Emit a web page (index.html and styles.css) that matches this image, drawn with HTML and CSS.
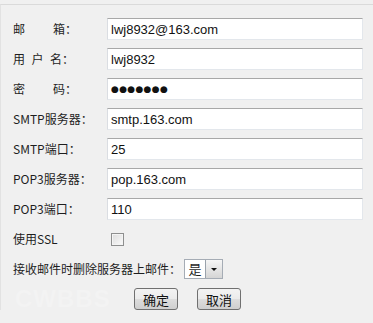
FILE: index.html
```html
<!DOCTYPE html>
<html lang="zh-CN">

<head>
  <meta charset="UTF-8">
  <link rel="stylesheet" href="styles.css">
</head>

<body>
  <div class="mail-title">邮件帐户设置</div>
  <div class="mail-panel">
    <div class="mail-row">
      <label class="mail-label"><span class="gap-wide">邮</span>箱：</label>
      <input class="mail-input" type="text" value="lwj8932@163.com">
    </div>
    <div class="mail-row">
      <label class="mail-label"><span class="gap-narrow">用户</span>名：</label>
      <input class="mail-input" type="text" value="lwj8932">
    </div>
    <div class="mail-row">
      <label class="mail-label"><span class="gap-wide">密</span>码：</label>
      <input class="mail-input mail-pass" type="text" value="●●●●●●●">
    </div>
    <div class="mail-row">
      <label class="mail-label">SMTP服务器：</label>
      <input class="mail-input" type="text" value="smtp.163.com">
    </div>
    <div class="mail-row">
      <label class="mail-label">SMTP端口：</label>
      <input class="mail-input" type="text" value="25">
    </div>
    <div class="mail-row">
      <label class="mail-label">POP3服务器：</label>
      <input class="mail-input" type="text" value="pop.163.com">
    </div>
    <div class="mail-row">
      <label class="mail-label">POP3端口：</label>
      <input class="mail-input" type="text" value="110">
    </div>
    <div class="mail-row">
      <label class="mail-label">使用SSL</label>
      <input class="mail-check" type="checkbox">
    </div>
    <div class="mail-row">
      <label class="mail-label-long">接收邮件时删除服务器上邮件：</label>
      <div class="mail-select">
        <span class="mail-select-value">是</span>
        <span class="mail-select-btn"><span class="mail-arrow"></span></span>
      </div>
    </div>
    <div class="mail-actions">
      <span class="mail-watermark">CWBBS</span>
      <button class="mail-btn">确定</button>
      <button class="mail-btn">取消</button>
    </div>
  </div>
</body>

</html>
```

FILE: styles.css
```css
body {
  margin: 0;
  background-color: #f0f0f0;
  font-family: "Noto Sans CJK SC", "Liberation Sans", sans-serif;
  color: #1e1e1e;
  overflow: hidden;
  height: 323px;
}

.mail-title {
  height: 14px;
  margin-top: -13px;
  padding-left: 86px;
  font-size: 12px;
  line-height: 14px;
  color: #a8a8a8;
}

.mail-panel {
  margin-top: 3px;
  border-top: 1px solid #dadada;
  border-left: 1px solid #e2e2e2;
  padding: 13px 0 0 12px;
  display: flex;
  flex-direction: column;
  gap: 8px;
}

.mail-row {
  display: flex;
  align-items: center;
  height: 22px;
}

.mail-label {
  width: 94px;
  flex-shrink: 0;
  font-size: 12px;
  line-height: 14px;
  white-space: nowrap;
}

.gap-wide {
  margin-right: 28px;
}

.gap-narrow {
  letter-spacing: 6.5px;
}

.mail-label-long {
  width: 171px;
  flex-shrink: 0;
  font-size: 12px;
  line-height: 14px;
  white-space: nowrap;
}

.mail-input {
  box-sizing: border-box;
  width: 256px;
  height: 22px;
  margin: 0;
  padding: 0 3px;
  border: 1px solid #e3e7ec;
  border-top-color: #a8a8a8;
  border-left-color: #dadde2;
  background: #fff;
  font-family: "Liberation Sans", sans-serif;
  font-size: 13px;
  color: #111;
  outline: none;
}

.mail-pass {
  font-family: "DejaVu Sans", sans-serif;
  font-size: 9px;
  letter-spacing: 0.3px;
}

.mail-check {
  appearance: none;
  -webkit-appearance: none;
  box-sizing: border-box;
  width: 13px;
  height: 13px;
  margin: 0 0 0 4px;
  border: 1px solid #8e8f8f;
  background: linear-gradient(135deg, #dcdcdc, #fbfbfb);
  box-shadow: inset 0 0 0 1px #f4f4f4;
}

.mail-select {
  display: flex;
  height: 20px;
  box-sizing: border-box;
  border: 1px solid #a5acb5;
  background: #fff;
}

.mail-select-value {
  width: 20px;
  font-size: 13px;
  line-height: 18px;
  text-align: center;
}

.mail-select-btn {
  width: 16px;
  border-left: 1px solid #9aa2ab;
  background: linear-gradient(#f6f6f6, #d5d5d5);
  display: flex;
  align-items: center;
  justify-content: center;
}

.mail-arrow {
  width: 0;
  height: 0;
  border-left: 3px solid transparent;
  border-right: 3px solid transparent;
  border-top: 3px solid #111;
}

.mail-actions {
  display: flex;
  align-items: center;
  height: 22px;
}

.mail-watermark {
  box-sizing: border-box;
  width: 121px;
  padding-left: 2px;
  font-family: "Liberation Sans", sans-serif;
  font-weight: bold;
  font-size: 24px;
  color: #f3f3f3;
  letter-spacing: 1px;
}

.mail-btn {
  box-sizing: border-box;
  width: 44px;
  height: 22px;
  margin-right: 19px;
  padding: 0;
  border: 1px solid #707070;
  border-radius: 3px;
  background: linear-gradient(#f3f3f3 0%, #ebebeb 50%, #dddddd 51%, #cfcfcf 100%);
  font-family: "Noto Sans CJK SC", sans-serif;
  font-size: 13px;
  color: #111;
}
```
